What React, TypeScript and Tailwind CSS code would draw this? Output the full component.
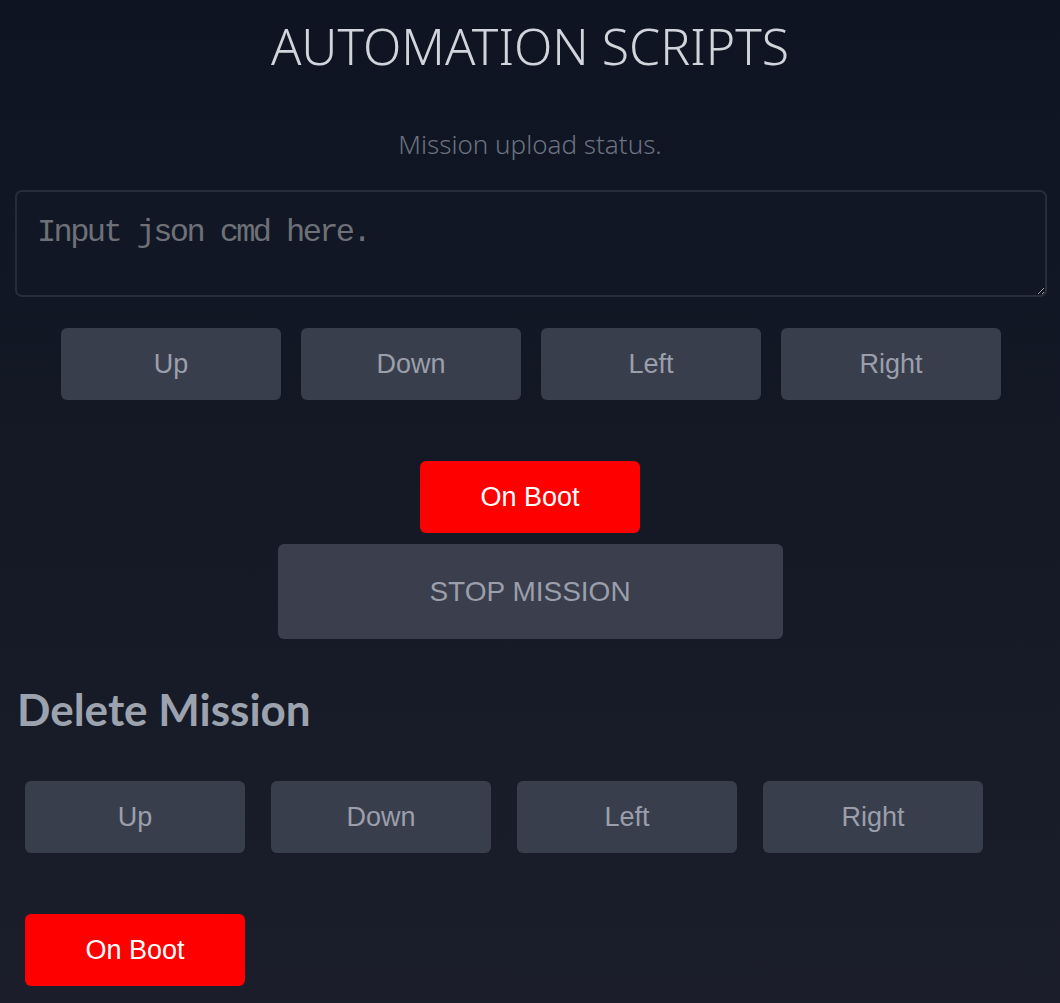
const dirs = ["Up", "Down", "Left", "Right"];

function GreyButton({ label, className = "" }: { label: string; className?: string }) {
  return (
    <button
      className={`w-[220px] h-[72px] rounded-[6px] bg-[#393e4d] text-[#9a9fab] text-[27px] font-['Liberation_Sans',Arial,sans-serif] ${className}`}
    >
      {label}
    </button>
  );
}

function BootButton() {
  return (
    <button className="w-[220px] h-[72px] rounded-[6px] bg-[#ff0000] text-white text-[27px] font-['Liberation_Sans',Arial,sans-serif]">
      On Boot
    </button>
  );
}

export default function App() {
  return (
    <div className="min-h-[1003px] w-full bg-gradient-to-b from-[#0e1422] to-[#1b1e2a] font-['Noto_Sans',sans-serif]">
      <h1 className="pt-[14px] text-center text-[50px] leading-[64px] font-light text-[#d1d5db]">
        AUTOMATION SCRIPTS
      </h1>
      <p className="mt-[50px] text-center text-[26px] leading-[32px] font-light text-[#6b7280]">
        Mission upload status.
      </p>
      <div className="pl-[15px] pr-[13px] mt-[30px]">
        <textarea
          placeholder="Input json cmd here."
          className="block w-full h-[107px] rounded-[7px] border-2 border-[#272d3a] bg-[#111724] pl-[20px] pr-[21px] pt-[22px] pb-[10px] text-[32px] tracking-[-2.6px] leading-[38px] text-[#d1d5db] placeholder:text-[#6e7078] font-['Liberation_Mono',monospace] outline-none"
        />
      </div>
      <div className="mt-[31px] flex justify-center gap-[20px] pl-[2px]">
        {dirs.map((d) => (
          <GreyButton key={d} label={d} />
        ))}
      </div>
      <div className="mt-[61px] flex flex-col items-center gap-[11px]">
        <BootButton />
        <button className="w-[505px] h-[95px] rounded-[6px] bg-[#3a3e4d] text-[#9a9fab] text-[28px] font-['Liberation_Sans',Arial,sans-serif]">
          STOP MISSION
        </button>
      </div>
      <h2 className="mt-[40px] pl-[17px] text-[44px] leading-[60px] font-bold text-[#9ca3af] font-['Lato',sans-serif]">
        Delete Mission
      </h2>
      <div className="mt-[42px] flex gap-[26px] pl-[25px]">
        {dirs.map((d) => (
          <GreyButton key={d} label={d} className="bg-[#3c404f]" />
        ))}
      </div>
      <div className="mt-[61px] pl-[25px]">
        <BootButton />
      </div>
    </div>
  );
}
